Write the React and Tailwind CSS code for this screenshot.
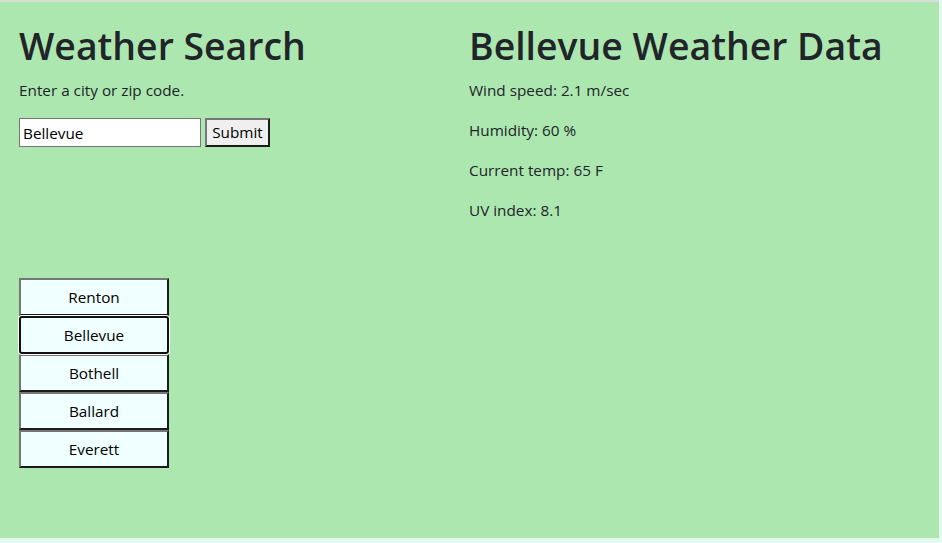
import { useState } from "react";

const cities = ["Renton", "Bellevue", "Bothell", "Ballard", "Everett"];

const App = () => {
  const [city, setCity] = useState("Bellevue");
  const [selected, setSelected] = useState("Bellevue");

  return (
    <div
      className="w-[942px] h-[543px] bg-[#e4f9f1] text-[#212529] text-[15.3px]"
      style={{ fontFamily: '"Open Sans", "Noto Sans", sans-serif' }}
    >
      <div className="w-[939px] h-[538px] border-t-2 border-[#d9dcd9] bg-[#ade7b0] flex">
        {/* search column */}
        <div className="w-[469px] pl-[19px] pt-[20px]">
          <h1 className="text-[37.4px] leading-[48px] font-semibold mb-2">Weather Search</h1>
          <p className="leading-6 mb-4">Enter a city or zip code.</p>
          <form className="flex gap-[4px]" onSubmit={(e) => e.preventDefault()}>
            <input
              className="w-[182px] h-[29px] border border-[#767676] bg-white px-[3px] text-black text-[15.3px]"
              value={city}
              onChange={(e) => setCity(e.target.value)}
            />
            <button className="w-[65px] h-[29px] bg-[#efefef] border-2 border-t-[#767676] border-l-[#767676] border-r-[#1b1b1b] border-b-[#1b1b1b] text-black text-[15.3px] leading-none">
              Submit
            </button>
          </form>
          <div className="mt-[131px] flex flex-col w-[150px]">
            {cities.map((c) =>
              c === selected ? (
                <button
                  key={c}
                  onClick={() => setSelected(c)}
                  className="h-[38px] bg-[#f0ffff] border-2 border-[#111] rounded-[3px] shadow-[0_0_0_1px_#ffffff] text-black relative"
                >
                  {c}
                </button>
              ) : (
                <button
                  key={c}
                  onClick={() => setSelected(c)}
                  className="h-[38px] bg-[#f0ffff] border-2 border-t-[#767676] border-l-[#767676] border-r-[#1b1b1b] border-b-[#1b1b1b] text-black"
                >
                  {c}
                </button>
              )
            )}
          </div>
        </div>
        {/* data column */}
        <div className="flex-1 pt-[20px]">
          <h1 className="text-[37.4px] leading-[48px] font-semibold mb-2">Bellevue Weather Data</h1>
          <p className="leading-6 mb-4">Wind speed: 2.1 m/sec</p>
          <p className="leading-6 mb-4">Humidity: 60 %</p>
          <p className="leading-6 mb-4">Current temp: 65 F</p>
          <p className="leading-6 mb-4">UV index: 8.1</p>
        </div>
      </div>
    </div>
  );
};

export default App;
